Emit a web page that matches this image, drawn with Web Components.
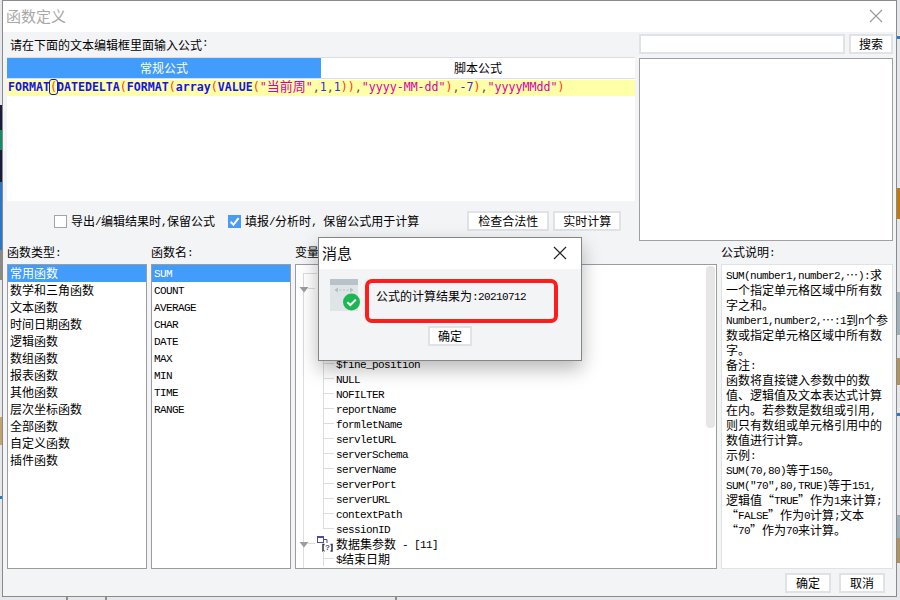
<!DOCTYPE html>
<html lang="zh-CN">
<head>
<meta charset="utf-8">
<title>函数定义</title>
<style>
html,body{margin:0;padding:0;width:900px;height:600px;overflow:hidden;background:#e8e8ea}
body{font:12px/15px "Noto Sans CJK SC","Liberation Sans",sans-serif;color:#000}
</style>
</head>
<body>
<fd-desktop>
  <fd-window heading="函数定义">
    <fd-upper slot="upper"></fd-upper>
    <fd-lower slot="lower"></fd-lower>
    <fd-button slot="footer" w="46">确定</fd-button>
    <fd-button slot="footer" w="46">取消</fd-button>
  </fd-window>
  <fd-modal heading="消息" text="公式的计算结果为:20210712" ok="确定"></fd-modal>
</fd-desktop>
<script>
const MONO='font-family:"Liberation Mono","DejaVu Sans Mono",monospace;font-size:11px;letter-spacing:-.6px;position:relative;top:-1px;white-space:pre;';
const esc=s=>s.replace(/&/g,'&amp;').replace(/</g,'&lt;');
// Latin runs sit in a half-em monospaced face, CJK runs in the CJK face
const mix=s=>esc(s).replace(/[\x20-\x7e]+/g,m=>`<span class="m">${m}</span>`);
const base=`<style>.m{${MONO}}</style>`;

class Base extends HTMLElement{
  render(html){ if(!this.shadowRoot) this.attachShadow({mode:'open'}); this.shadowRoot.innerHTML=base+html; }
}

customElements.define('fd-desktop',class extends Base{connectedCallback(){this.render(`<style>
:host{display:flex;position:relative;box-sizing:border-box;width:900px;height:600px;padding:0 3px 3px 2px;
 background:
  linear-gradient(#1a1c3c 0 0) 0 105px/2px 25px no-repeat,
  linear-gradient(#138a63 0 0) 0 130px/2px 20px no-repeat,
  linear-gradient(#1a1c3c 0 0) 0 150px/2px 32px no-repeat,
  linear-gradient(#2c78c8 0 0) 0 182px/2px 68px no-repeat,
  linear-gradient(#8a8a8a 0 0) 0 250px/2px 30px no-repeat,
  linear-gradient(#c2a46e 0 0) 0 417px/2px 28px no-repeat,
  linear-gradient(#2c78c8 0 0) 0 496px/2px 3px no-repeat,
  linear-gradient(#c07a10 0 0) 897px 188px/3px 31px no-repeat,
  linear-gradient(#9fb0bc 0 0) 897px 292px/3px 43px no-repeat,
  linear-gradient(#b0925f 0 0) 897px 358px/3px 27px no-repeat,
  linear-gradient(#2c78c8 0 0) 897px 413px/3px 3px no-repeat,
  linear-gradient(#9fb0bc 0 0) 897px 515px/3px 23px no-repeat,
  linear-gradient(#b0925f 0 0) 897px 538px/3px 25px no-repeat,
  linear-gradient(#2c78c8 0 0) 897px 36px/3px 3px no-repeat,
  linear-gradient(#8e8e8e 0 0) 66px 597px/2px 3px no-repeat,
  linear-gradient(#8e8e8e 0 0) 105px 597px/2px 3px no-repeat,
  linear-gradient(#8e8e8e 0 0) 395px 597px/2px 3px no-repeat,
  #e6e7ea}
</style><slot></slot>`)}});

customElements.define('fd-window',class extends Base{connectedCallback(){this.render(`<style>
:host{display:flex;flex-direction:column;flex:1;box-sizing:border-box;border:1px solid #8a8a8a;background:#f3f4f6;min-width:0}
.bar{height:31px;box-sizing:border-box;flex:none;background:#fff;display:flex;align-items:center;justify-content:space-between;padding:0 13px 2px 3px}
.t{font-size:15px;color:#a8a8a8}
.x{display:block}
.up{display:block;padding:0 3px 0 4px}
.lo{display:block;padding:0 3px 0 4px;flex:1;min-height:0}
.ft{display:flex;justify-content:flex-end;gap:8px;height:27px;box-sizing:border-box;padding:4px 11px 0 0}
</style>
<div class="bar"><span class="t">${this.getAttribute('heading')}</span>
<svg class="x" width="14" height="14" viewBox="0 0 14 14"><path d="M1 1L13 13M13 1L1 13" stroke="#9a9a9a" stroke-width="1.1" fill="none"/></svg></div>
<div class="up"><slot name="upper"></slot></div>
<div class="lo"><slot name="lower"></slot></div>
<div class="ft"><slot name="footer"></slot></div>`)}});

customElements.define('fd-button',class extends Base{connectedCallback(){const w=this.getAttribute('w')||44;this.render(`<style>
:host{display:flex;align-items:center;justify-content:center;box-sizing:border-box;width:${w}px;height:20px;background:#fff;border:2px solid #e1e2e6;font-size:12px;line-height:16px;color:#000;flex:none}
</style><slot></slot>`)}});

customElements.define('fd-check',class extends Base{connectedCallback(){const on=this.hasAttribute('on');this.render(`<style>
:host{display:inline-flex;align-items:center;gap:4px;white-space:nowrap;font-size:12px}
.b{width:13px;height:13px;box-sizing:border-box;flex:none;border:1px solid #a4a4a4;background:#fff;display:block}
.b.on{border:none;background:#4a9bf2}
</style>
${on?`<svg class="b on" viewBox="0 0 13 13"><path d="M2.6 6.8L5.4 9.8L10.6 3.2" stroke="#fff" stroke-width="2" fill="none"/></svg>`:`<span class="b"></span>`}
<span>${mix(this.getAttribute('label'))}</span>`)}});

customElements.define('fd-formula',class extends Base{connectedCallback(){
  const src='FORMAT(DATEDELTA(FORMAT(array(VALUE("当前周",1,1)),"yyyy-MM-dd"),-7),"yyyyMMdd")';
  let first=true;
  const out=src.replace(/"[^"]*"|[A-Za-z]+|[()]|-?\d+|,/g,t=>{
    if(t[0]==='"') return `<span class="s">${t.replace(/[\u4e00-\u9fff]+/g,c=>`<span class="c">${c}</span>`)}</span>`;
    if(/^[A-Za-z]/.test(t)) return `<span class="f">${t}</span>`;
    if(t==='('&&first){first=false;return `<span class="p hl">(</span>`;}
    if(/[()]/.test(t)) return `<span class="p">${t}</span>`;
    if(t===',') return `<span class="k">,</span>`;
    return `<span class="n">${t}</span>`;
  });
  this.render(`<style>
:host{display:block;background:#fff;height:122px}
.l{background:#ffffa8;height:16px;line-height:11px;margin-top:1px;padding-left:1px;white-space:pre;font-family:"DejaVu Sans Mono","Liberation Mono",monospace;font-size:11.62px}
.f{color:#1414e6;font-weight:700;letter-spacing:0}
.p{color:#ff3a10}
.k{color:#555}
.n{color:#3a2ce0}
.s{color:#d800a8}
.c{font-family:"Noto Sans CJK SC",sans-serif;font-size:13px}
.hl{outline:1px solid #1a1ab0;outline-offset:0;border-radius:2px}
</style><div class="l">${out}</div>`)}});

customElements.define('fd-tabs',class extends Base{connectedCallback(){this.render(`<style>
:host{display:grid;grid-template-columns:1fr 1fr;height:22px;box-sizing:border-box;border-top:1px solid #dddee2;border-bottom:1px solid #dddee2;background:#fff;font-size:12px;line-height:20px;text-align:center}
.a{background:#429cfb;color:#fff}
</style><div class="a">常规公式</div><div>脚本公式</div>`)}});

customElements.define('fd-upper',class extends Base{connectedCallback(){this.render(`<style>
:host{display:grid;grid-template-columns:628px 254px;gap:4px;height:211px}
.left{display:flex;flex-direction:column;min-width:0}
.lab{height:25px;display:flex;align-items:center;padding:0 0 0 3px;font-size:12px;white-space:nowrap}
.opt{display:flex;align-items:center;flex:1;padding-left:47px;padding-bottom:1px}
.opt fd-check+fd-check{margin-left:13px}
.btns{display:flex;gap:4px;margin-left:48px;margin-top:-2px}
.right{display:flex;flex-direction:column;gap:4px;padding-top:2px;padding-bottom:2px;box-sizing:border-box}
.search{display:flex;gap:4px;height:20px}
.inp{flex:1;background:#fff;border:2px solid #e1e2e6;box-sizing:border-box}
.box{flex:1;background:#fff;border:2px solid #a0a0a0;box-sizing:border-box;border-width:1.5px}
</style>
<div class="left">
  <div class="lab">${mix('请在下面的文本编辑框里面输入公式:')}</div>
  <fd-tabs></fd-tabs>
  <fd-formula></fd-formula>
  <div class="opt">
    <fd-check label="导出/编辑结果时,保留公式"></fd-check>
    <fd-check on label="填报/分析时, 保留公式用于计算"></fd-check>
    <div class="btns"><fd-button w="82">检查合法性</fd-button><fd-button w="68">实时计算</fd-button></div>
  </div>
</div>
<div class="right">
  <div class="search"><div class="inp"></div><fd-button w="44">搜索</fd-button></div>
  <div class="box"></div>
</div>`)}});

customElements.define('fd-list',class extends Base{connectedCallback(){
  const items=this.getAttribute('items').split('|');
  this.render(`<style>
:host{display:block;box-sizing:border-box;background:#fff;border:1.5px solid #9c9c9c;overflow:hidden;height:100%}
div{height:17px;line-height:15px;padding-left:2px;white-space:nowrap}
.on{background:#429cfb;color:#fff}
</style>${items.map((t,i)=>`<div class="${i?'':'on'}">${mix(t)}</div>`).join('')}`)}});

customElements.define('fd-tree',class extends Base{connectedCallback(){
  const leaves=['$fine_position','NULL','NOFILTER','reportName','formletName','servletURL','serverSchema','serverName','serverPort','serverURL','contextPath','sessionID'];
  const tri=`<svg class="tri" width="10" height="6" viewBox="0 0 10 6"><path d="M0.5 0H9.5L5 5.5Z" fill="#9c9c9c"/></svg>`;
  const ico=`<svg class="ico" width="17" height="16" viewBox="0 0 17 16">
   <rect x="1.5" y="0.5" width="6" height="6" fill="#fff" stroke="#4c4c9c"/><rect x="1" y="0" width="7" height="2" fill="#4c4c9c"/>
   <path d="M8 3.5H11V7" stroke="#4c4c9c" fill="none"/>
   <path d="M8.5 8.5H7V15H8.5M14.5 8.5H16V15H14.5" stroke="#333" stroke-width="1.5" fill="none"/>
   <text x="9" y="14" font-family="Liberation Sans" font-weight="700" font-size="8" fill="#4a4a90">?</text></svg>`;
  this.render(`<style>
:host{display:flex;box-sizing:border-box;background:#fff;border:1.5px solid #9c9c9c;overflow:hidden;height:100%}
.t{flex:1;min-width:0;padding-top:1px;background:linear-gradient(#dcdcdc 0 0) 7px 8px/1px 100% no-repeat;overflow:hidden}
.r{height:15px;line-height:15px;padding-left:40px;white-space:nowrap;position:relative}
.leaf{background:
  linear-gradient(#dcdcdc 0 0) 27px 0/1px 100% no-repeat,
  linear-gradient(#dcdcdc 0 0) 27px 7px/11px 1px no-repeat}
.last{background:
  linear-gradient(#dcdcdc 0 0) 27px 0/1px 8px no-repeat,
  linear-gradient(#dcdcdc 0 0) 27px 7px/11px 1px no-repeat}
.tri{position:absolute;left:3px;top:6px}
.ico{position:absolute;left:20px;top:0}
.g{background:linear-gradient(#dcdcdc 0 0) 12px 7px/7px 1px no-repeat}
.root{background:linear-gradient(#dcdcdc 0 0) 7px 7px/14px 1px no-repeat}
.bar{width:10px;flex:none;background:#fff;padding:1px 0 0}
.th{height:162px;background:#e6e6e6;border-radius:4px;margin-right:1px}
</style>
<div class="t">
 <div class="r root"></div>
 <div class="r g">${tri}</div>
 <div class="r leaf"></div><div class="r leaf"></div><div class="r leaf"></div><div class="r leaf"></div>
 ${leaves.map((l,i)=>`<div class="r ${i==leaves.length-1?'last':'leaf'}">${mix(l)}</div>`).join('')}
 <div class="r g">${tri}${ico}${mix('数据集参数 - [11]')}</div>
 <div class="r leaf">${mix('$结束日期')}</div>
</div>
<div class="bar"><div class="th"></div></div>`)}});

customElements.define('fd-desc',class extends Base{connectedCallback(){
  const L=['SUM(number1,number2,…):求','一个指定单元格区域中所有数','字之和。','Number1,number2,…:1到n个参','数或指定单元格区域中所有数','字。','备注:','函数将直接键入参数中的数','值、逻辑值及文本表达式计算','在内。若参数是数组或引用,','则只有数组或单元格引用中的','数值进行计算。','示例:','SUM(70,80)等于150。','SUM("70",80,TRUE)等于151,','逻辑值“TRUE”作为1来计算;','“FALSE”作为0计算;文本','“70”作为70来计算。'];
  this.render(`<style>
:host{display:block;box-sizing:border-box;background:#fff;border:1.5px solid #e1e2e6;height:100%;overflow:hidden;padding:2px 0 0 4px}
div{height:15px;line-height:15px;white-space:nowrap}
</style>${L.map(t=>`<div>${mix(t)}</div>`).join('')}`)}});

customElements.define('fd-lower',class extends Base{connectedCallback(){this.render(`<style>
:host{display:grid;grid-template-columns:140px 140px 422px 172px;column-gap:4px;grid-template-rows:21px 1fr;height:100%}
.h{font-size:12px;line-height:18px;white-space:nowrap}
.v{min-height:0}
</style>
<div class="h">${mix('函数类型:')}</div><div class="h">${mix('函数名:')}</div><div class="h">${mix('变量')}</div><div class="h">${mix('公式说明:')}</div>
<fd-list class="v" items="常用函数|数学和三角函数|文本函数|时间日期函数|逻辑函数|数组函数|报表函数|其他函数|层次坐标函数|全部函数|自定义函数|插件函数"></fd-list>
<fd-list class="v" items="SUM|COUNT|AVERAGE|CHAR|DATE|MAX|MIN|TIME|RANGE"></fd-list>
<fd-tree class="v"></fd-tree>
<fd-desc class="v"></fd-desc>`)}});

customElements.define('fd-modal',class extends Base{connectedCallback(){this.render(`<style>
:host{position:absolute;left:318px;top:237px;width:264px;height:124px;box-sizing:border-box;border:1px solid #858585;background:#f3f4f6;display:flex;flex-direction:column;box-shadow:0 8px 18px rgba(0,0,0,.28)}
.bar{height:31px;box-sizing:border-box;flex:none;background:#fff;display:flex;align-items:center;justify-content:space-between;padding:0 14px 2px 3px;font-size:15px;color:#111}
.body{display:flex;flex:1;flex-direction:column;align-items:center}
.row{display:flex;align-self:flex-start;align-items:flex-start;padding:10px 0 0 11px;gap:4px}
.red{box-sizing:border-box;width:193px;height:44px;border:4px solid #ff1c1c;border-radius:7px;background:#f3f4f6;display:flex;align-items:center;padding:0 0 8px 7px;white-space:nowrap;margin-top:0}
fd-button{margin-top:3px}
</style>
<div class="bar"><span>${this.getAttribute('heading')}</span>
<svg width="14" height="14" viewBox="0 0 14 14"><path d="M1 1L13 13M13 1L1 13" stroke="#222" stroke-width="1.2" fill="none"/></svg></div>
<div class="body">
 <div class="row">
  <svg width="31" height="33" viewBox="0 0 31 33" style="flex:none">
   <rect x="0" y="0" width="28" height="32" fill="#dfe4e7"/><rect x="0" y="0" width="28" height="6" fill="#b8c2c8"/>
   <path d="M6 11H22" stroke="#b4bdc2" stroke-dasharray="2 1.5" fill="none"/><path d="M8 8.5L4.5 11L8 13.5ZM20 8.5L23.5 11L20 13.5Z" fill="#b4bdc2"/>
   <circle cx="21.5" cy="23" r="8.5" fill="#1eb655"/><path d="M17.3 23.2L20.4 26L25.8 20.6" stroke="#fff" stroke-width="2" fill="none"/>
  </svg>
  <div class="red"><span>${mix(this.getAttribute('text'))}</span></div>
 </div>
 <fd-button w="44">${this.getAttribute('ok')}</fd-button>
</div>`)}});
</script>
</body>
</html>
